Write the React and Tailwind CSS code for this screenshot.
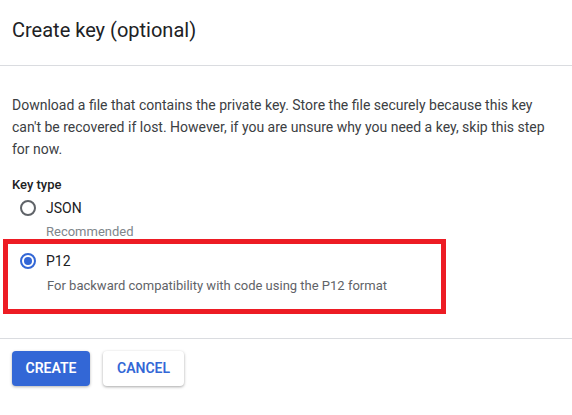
import React, { useState } from 'react'

function Radio({ checked }) {
  return checked ? (
    <span className="flex h-[16px] w-[16px] items-center justify-center rounded-full border-2 border-[#3367d6]">
      <span className="h-[8px] w-[8px] rounded-full bg-[#3367d6]" />
    </span>
  ) : (
    <span className="block h-[16px] w-[16px] rounded-full border-2 border-[#5f6368]" />
  )
}

export default function App() {
  const [keyType, setKeyType] = useState('P12')

  return (
    <div className="h-[415px] w-[572px] bg-white font-['Roboto',sans-serif] text-[#202124]">
      <div className="flex h-[66px] items-center border-b border-[#dadce0] px-3 pb-[6px]">
        <h1 className="text-[20px] font-normal">Create key (optional)</h1>
      </div>

      <div className="px-3 pt-[28px]">
        <p className="text-[14px] leading-[22px] text-[#3c4043]">
          Download a file that contains the private key. Store the file securely because this key
          <br />
          can't be recovered if lost. However, if you are unsure why you need a key, skip this step
          <br />
          for now.
        </p>

        <div className="mt-4 text-[13px] font-medium leading-[18px]">Key type</div>

        <button onClick={() => setKeyType('JSON')} className="mt-[2px] flex h-6 items-center">
          <span className="ml-[8px]">
            <Radio checked={keyType === 'JSON'} />
          </span>
          <span className="ml-[10px] text-[14px]">JSON</span>
        </button>
        <div className="mt-[3px] pl-[34px] text-[13px] leading-[18px] text-[#80868b]">Recommended</div>

        <div className="relative mt-[8px]">
          <div className="pointer-events-none absolute left-[-9px] top-[-10px] h-[75px] w-[443px] border-[5px] border-[#ed1c24]" />
          <button onClick={() => setKeyType('P12')} className="flex h-6 items-center">
            <span className="ml-[8px]">
              <Radio checked={keyType === 'P12'} />
            </span>
            <span className="ml-[10px] text-[14px]">P12</span>
          </button>
          <div className="mt-[4px] pl-[35px] text-[13px] leading-[18px] text-[#5f6368]">
            For backward compatibility with code using the P12 format
          </div>
        </div>
      </div>

      <div className="mt-[43px] flex gap-[13px] border-t border-[#dadce0] px-3 pt-[12px]">
        <button className="h-[35px] w-[78px] rounded bg-[#3367d6] text-[14px] font-semibold text-white shadow-[0_1px_3px_rgba(0,0,0,0.3)]">
          CREATE
        </button>
        <button className="h-[35px] w-[81px] rounded bg-white text-[14px] font-semibold text-[#3367d6] shadow-[0_1px_3px_rgba(0,0,0,0.35)]">
          CANCEL
        </button>
      </div>
    </div>
  )
}
